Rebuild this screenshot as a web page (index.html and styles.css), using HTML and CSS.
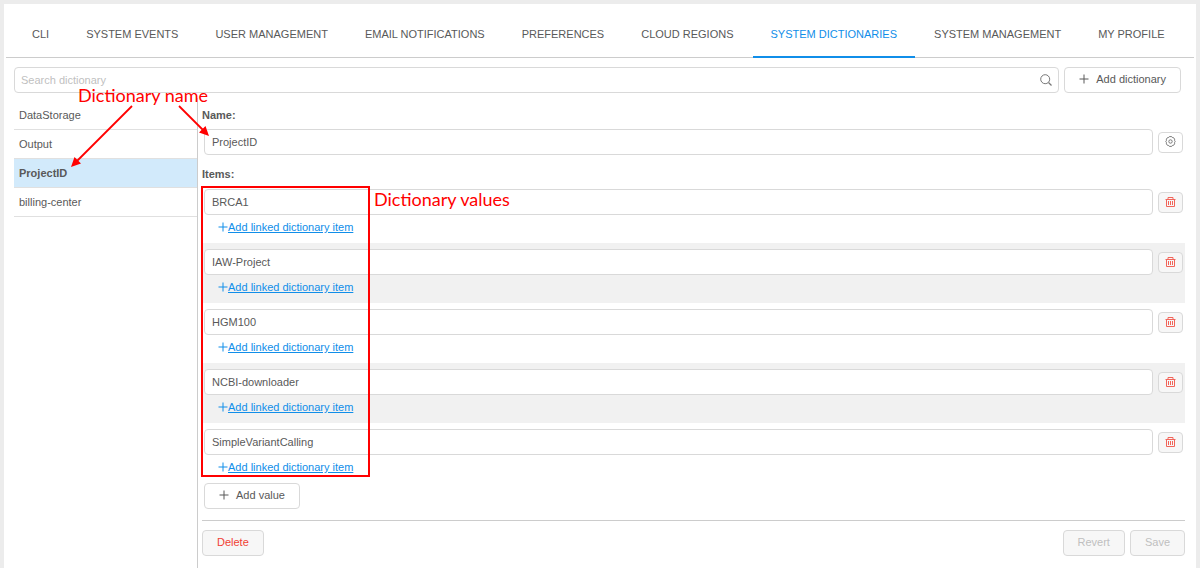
FILE: index.html
```html
<!DOCTYPE html>
<html lang="en">
<head>
<meta charset="utf-8">
<title>System dictionaries</title>
<link rel="stylesheet" href="styles.css">
</head>
<body>
<svg class="sprite" aria-hidden="true">
  <symbol id="plus" viewBox="0 0 10 10"><path d="M5 .5v9M.5 5h9" fill="none" stroke="currentColor"/></symbol>
  <symbol id="trash" viewBox="0 0 11 12"><path d="M.5 3.500h10M1.500 3.500v7h8v-7M3 3V1.500h5V3M3.500 5v4M5.500 5v4M7.500 5v4" fill="none" stroke="currentColor"/></symbol>
</svg>
<main class="panel">
  <nav class="tabs">
    <a class="tab" href="#cli">CLI</a>
    <a class="tab" href="#events">SYSTEM EVENTS</a>
    <a class="tab" href="#users">USER MANAGEMENT</a>
    <a class="tab" href="#email">EMAIL NOTIFICATIONS</a>
    <a class="tab" href="#preferences">PREFERENCES</a>
    <a class="tab" href="#regions">CLOUD REGIONS</a>
    <a class="tab active" href="#dictionaries" aria-current="page">SYSTEM DICTIONARIES</a>
    <a class="tab" href="#management">SYSTEM MANAGEMENT</a>
    <a class="tab" href="#profile">MY PROFILE</a>
  </nav>
  <div class="toolbar">
    <label class="field search">
      <input type="text" placeholder="Search dictionary" aria-label="Search dictionary">
      <svg class="search-icon" viewBox="0 0 12 12" aria-hidden="true"><circle cx="5.200" cy="5.200" r="4.500" fill="none" stroke="currentColor"/><path d="M8.500 8.500l3 3" stroke="currentColor" stroke-width="1.200"/></svg>
    </label>
    <button class="button add" type="button"><svg class="plus" aria-hidden="true"><use href="#plus"/></svg>Add dictionary</button>
  </div>
  <div class="columns">
    <nav class="dictionaries">
      <a href="#DataStorage">DataStorage</a>
      <a href="#Output">Output</a>
      <a class="selected" href="#ProjectID" aria-current="true">ProjectID</a>
      <a href="#billing-center">billing-center</a>
    </nav>
    <form class="editor">
      <label class="label" for="name">Name:</label>
      <div class="row">
        <input class="field" id="name" type="text" value="ProjectID">
        <button class="button small" type="button" aria-label="Settings"><svg class="gear" viewBox="0 0 11 11" aria-hidden="true"><path d="M4.300 .6h2.400l.6.900 1.300.2 1 1.500-.1 1.100.7 1.200-.7 1.200.1 1.100-1 1.500-1.300.2-.6.900H4.300l-.6-.9-1.300-.2-1-1.500.1-1.100-.7-1.200.7-1.200-.1-1.100 1-1.500 1.300-.2z" fill="none" stroke="currentColor"/><circle cx="5.500" cy="5.500" r="1.700" fill="none" stroke="currentColor"/></svg></button>
      </div>
      <h2 class="label items-label">Items:</h2>
      <div class="items">
        <div class="item">
          <div class="row"><input class="field" type="text" value="BRCA1" aria-label="Item 1"><button class="button small danger" type="button" aria-label="Delete item 1"><svg class="trash" aria-hidden="true"><use href="#trash"/></svg></button></div>
          <a class="link" href="#link1"><svg class="plus" aria-hidden="true"><use href="#plus"/></svg><span>Add linked dictionary item</span></a>
        </div>
        <div class="item">
          <div class="row"><input class="field" type="text" value="IAW-Project" aria-label="Item 2"><button class="button small danger" type="button" aria-label="Delete item 2"><svg class="trash" aria-hidden="true"><use href="#trash"/></svg></button></div>
          <a class="link" href="#link2"><svg class="plus" aria-hidden="true"><use href="#plus"/></svg><span>Add linked dictionary item</span></a>
        </div>
        <div class="item">
          <div class="row"><input class="field" type="text" value="HGM100" aria-label="Item 3"><button class="button small danger" type="button" aria-label="Delete item 3"><svg class="trash" aria-hidden="true"><use href="#trash"/></svg></button></div>
          <a class="link" href="#link3"><svg class="plus" aria-hidden="true"><use href="#plus"/></svg><span>Add linked dictionary item</span></a>
        </div>
        <div class="item">
          <div class="row"><input class="field" type="text" value="NCBI-downloader" aria-label="Item 4"><button class="button small danger" type="button" aria-label="Delete item 4"><svg class="trash" aria-hidden="true"><use href="#trash"/></svg></button></div>
          <a class="link" href="#link4"><svg class="plus" aria-hidden="true"><use href="#plus"/></svg><span>Add linked dictionary item</span></a>
        </div>
        <div class="item">
          <div class="row"><input class="field" type="text" value="SimpleVariantCalling" aria-label="Item 5"><button class="button small danger" type="button" aria-label="Delete item 5"><svg class="trash" aria-hidden="true"><use href="#trash"/></svg></button></div>
          <a class="link" href="#link5"><svg class="plus" aria-hidden="true"><use href="#plus"/></svg><span>Add linked dictionary item</span></a>
        </div>
        <div class="callout-box"></div>
        <div class="callout values-callout">Dictionary values</div>
      </div>
      <div class="row"><button class="button add" type="button"><svg class="plus" aria-hidden="true"><use href="#plus"/></svg>Add value</button></div>
      <footer class="actions">
        <button class="button danger" type="button">Delete</button>
        <span class="spacer"></span>
        <button class="button" type="button" disabled>Revert</button>
        <button class="button" type="button" disabled>Save</button>
      </footer>
    </form>
    <div class="callout name-callout">Dictionary name</div>
    <svg class="arrows" viewBox="0 0 144 64" aria-hidden="true">
      <g stroke="#f00" stroke-width="1.800"><path d="M64 2L9 57"/><path d="M111 2l24 24"/></g>
      <path fill="#f00" d="M3 63l3.500-10 6.500 6.500zM141 32l-10-3.500 6.500-6.500z"/>
    </svg>
  </div>
</main>
</body>
</html>
```
FILE: styles.css
```css
* { box-sizing: border-box; }
body {
  margin: 0;
  padding: 4px 4px 0;
  min-height: 100vh;
  display: flex;
  background: #ececec;
  color: #595959;
  font: 11px/16px "Liberation Sans", Arial, sans-serif;
}
input, button { font: inherit; color: inherit; }
a { color: inherit; text-decoration: none; }
.sprite { position: absolute; width: 0; height: 0; }

.panel {
  flex: 1;
  min-width: 0;
  display: flex;
  flex-direction: column;
  background: #fff;
}
.tabs {
  display: flex;
  gap: 1px;
  margin: 0 2px;
  padding: 0 8px;
  border-bottom: 1px solid #ccc;
}
.tab {
  padding: 22px 18px 14px;
  margin-bottom: -1px;
  border-bottom: 2px solid transparent;
  white-space: nowrap;
}
.tab.active { color: #108ee9; border-color: #108ee9; }

.field {
  height: 26px;
  padding: 0 7px;
  border: 1px solid #d9d9d9;
  border-radius: 4px;
  background: #fff;
}
.toolbar {
  display: flex;
  gap: 5px;
  padding: 9px 15px 5px 10px;
}
.search { flex: 1; display: flex; align-items: center; padding: 0 6px; }
.search input { flex: 1; padding: 0; border: 0; outline: 0; background: none; }
.search input::placeholder { color: #bfbfbf; opacity: 1; }
.search-icon { width: 12px; height: 12px; color: #777; }

.button {
  height: 26px;
  padding: 0 14px 2px;
  border: 1px solid #d9d9d9;
  border-radius: 4px;
  background: #fff;
}
.button:disabled { background: #f7f7f7; color: #bfbfbf; }
.button.add { display: flex; align-items: center; gap: 7px; padding: 0 14px 2px; }
.button.danger { background: #f7f7f7; color: #f04134; }
.button.small {
  display: flex;
  align-items: center;
  justify-content: center;
  width: 25px;
  height: 21px;
  padding: 0 0 1px;
}
.plus { width: 10px; height: 10px; }
.trash { width: 11px; height: 12px; opacity: .8; }
.gear { width: 11px; height: 11px; opacity: .8; }

.columns {
  position: relative;
  flex: 1;
  display: grid;
  grid-template-columns: 184px 1fr;
  padding: 0 11px 0 10px;
}
.dictionaries { padding-top: 3px; border-right: 1px solid #ccc; }
.dictionaries a {
  display: block;
  padding: 6px 5px;
  border-bottom: 1px solid #e0e0e0;
}
.dictionaries .selected { background: #d2eafb; font-weight: bold; }

.editor { padding: 9px 0 12px 4px; }
.label { display: block; margin: 0 0 6px; font-size: 11px; font-weight: bold; }
.items-label { margin: 11px 0 1px; }
.row { display: flex; align-items: center; gap: 5px; padding: 0 2px; }
.row .field { flex: 1; min-width: 0; }
.items { position: relative; }
.item { padding: 6px 0 8px; }
.item:nth-child(even) { background: #f1f1f1; }
.link {
  display: flex;
  align-items: center;
  width: max-content;
  padding: 4px 0 0 16px;
  color: #108ee9;
}
.link span { text-decoration: underline; }
.actions {
  display: flex;
  gap: 5px;
  margin-top: 11px;
  padding-top: 9px;
  border-top: 1px solid #ccc;
}
.spacer { flex: 1; }

.callout {
  position: absolute;
  color: #f00;
  font: 18px/22px Lato, sans-serif;
  white-space: nowrap;
  pointer-events: none;
}
.callout-box {
  position: absolute;
  top: 3px;
  bottom: 6px;
  left: -1px;
  width: 169px;
  border: 2px solid #f00;
  pointer-events: none;
}
.values-callout { top: 5px; left: 172px; }
.name-callout { top: -14px; left: 74px; }
.arrows {
  position: absolute;
  top: 6px;
  left: 64px;
  width: 144px;
  height: 64px;
  pointer-events: none;
}
```
